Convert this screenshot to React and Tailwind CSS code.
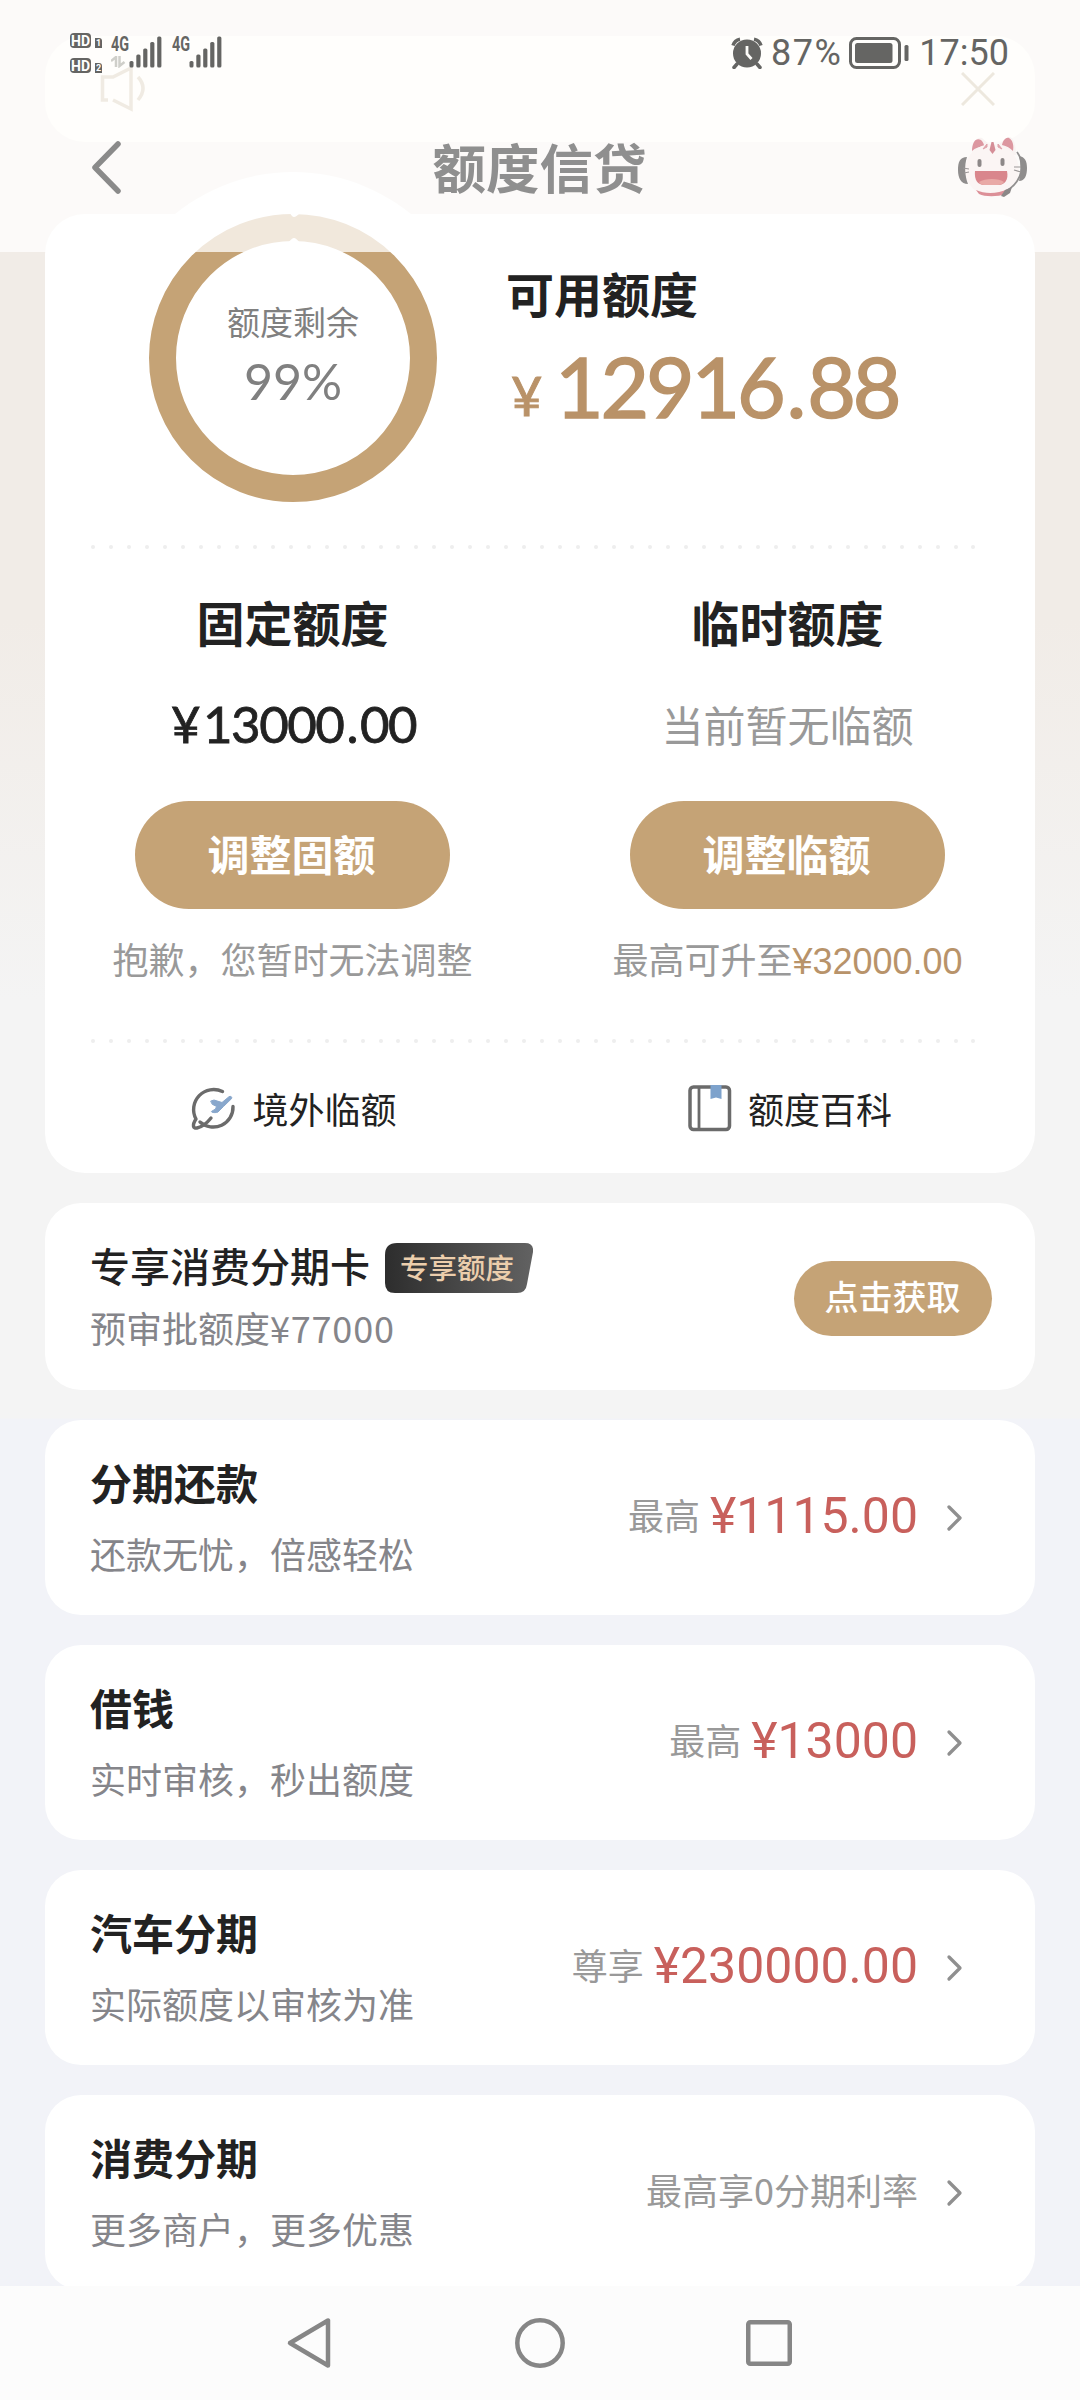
import React from "react";

const CJK = "font-['Noto_Sans_CJK_SC',sans-serif]";

function Signal() {
  return (
    <svg width="34" height="32" viewBox="0 0 34 32" fill="#656563">
      <rect x="0.5" y="25" width="4" height="6.5" rx="1.5" />
      <rect x="7.3" y="18.500" width="4.200" height="13" rx="1.500" />
      <rect x="14.200" y="12.500" width="4.200" height="19" rx="1.500" />
      <rect x="21.200" y="6" width="4.200" height="25.500" rx="1.500" />
      <rect x="28.200" y="0.500" width="4.200" height="31" rx="1.500" />
    </svg>
  );
}

function HdTag({ n }) {
  return (
    <div className="flex h-[15px] items-end gap-[4px]">
      <div className="flex h-[15px] w-[21px] items-center justify-center rounded-[4px] bg-[#656563] font-[Roboto,sans-serif] text-[14px] leading-none font-bold text-white">
        HD
      </div>
      <div className="flex h-[10px] w-[7px] items-center justify-center rounded-tr-[3px] bg-[#656563] font-[Roboto,sans-serif] text-[9px] leading-none font-bold text-white">
        {n}
      </div>
    </div>
  );
}

function AlarmIcon() {
  return (
    <svg width="32" height="32" viewBox="0 0 32 32" fill="none">
      <circle cx="16" cy="16.500" r="14" fill="#656563" />
      <path d="M2 8.500A9 9 0 0 1 9 2.200M30 8.500A9 9 0 0 0 23 2.200" stroke="#656563" strokeWidth="3.500" />
      <path d="M6 27l-3 3.500M26 27l3 3.500" stroke="#656563" strokeWidth="3.500" strokeLinecap="round" />
      <path d="M16 9v8l4.500 5" stroke="#fdfcf9" strokeWidth="2.800" />
    </svg>
  );
}

function Battery() {
  return (
    <svg width="60" height="32" viewBox="0 0 60 32" fill="none">
      <rect x="1.500" y="1.500" width="49" height="29" rx="6" stroke="#656563" strokeWidth="3" />
      <rect x="6" y="6" width="37.500" height="20" rx="2.500" fill="#656563" />
      <rect x="55.500" y="8" width="4" height="16" rx="1.500" fill="#656563" />
    </svg>
  );
}

function Mascot() {
  return (
    <svg width="72" height="64" viewBox="0 0 72 64" fill="none">
      <path d="M15 20C15 7 20 0 25 2l8 7h8l10-8c5-1 8 6 8 18z" fill="#f9f3f2" />
      <path d="M15 15C15 6 19 1 24 4c2 2 3 4 3 6-5 1-9 2-12 5zM45 9c1-5 4-8 7-7 4 2 5 8 4 13-3-3-6-5-11-6z" fill="#dc97a0" />
      <ellipse cx="35" cy="34" rx="27" ry="26" fill="#fbf5f4" />
      <path d="M60 16c8 11 6 28-9 38" stroke="#929090" strokeWidth="1.800" />
      <path d="M10 21C3 21 1 26 1 34s3 14 10 14c-3-8-4-18-1-27z" fill="#8f8d8d" />
      <path d="M62 20c6 1 8 5 8 12s-2 13-8 13c2-8 2-17 0-25z" fill="#8f8d8d" />
      <path d="M30 8l-4 5 4-2zM41 8l4 5-4-2z" fill="#dfa5ac" stroke="#dfa5ac" strokeWidth="1" />
      <path d="M34.500 6h2l2 8-3 4-3-4z" fill="#d58e97" />
      <rect x="20.500" y="23" width="4" height="8" rx="2" fill="#8d8888" />
      <rect x="43.500" y="22" width="4" height="8" rx="2" fill="#8d8888" />
      <path d="M18 35h32c2 9-3 14-8 14H27c-6 0-10-5-9-14z" fill="#d9868c" />
      <path d="M22 46c6-4 20-4 25 0-1 2-4 3-6 3H27c-2 0-4-1-5-3z" fill="#e9a9a6" />
      <path d="M6 32l6 1M7 37l5-1M57 31h7M57 34l7 2" stroke="#9b9797" strokeWidth="1.200" />
      <path d="M19 54c9 4 21 4 32-1l-2 5c-9 3-21 3-27 0z" fill="#dc9098" />
      <path d="M44 60l4-6 7-3-2 6-6 4z" fill="#8b8888" />
    </svg>
  );
}

function GlobePlane() {
  return (
    <svg width="46" height="46" viewBox="0 0 46 46" fill="none" strokeLinecap="round" strokeLinejoin="round">
      <path d="M31.500 5.600A20 20 0 0 0 5 33C1 39 2 43 6 42c5-1 10-5 14-10" stroke="#6b6b6b" strokeWidth="3.400" />
      <path d="M42 20.500A19.800 19.800 0 0 1 9 36" stroke="#6b6b6b" strokeWidth="3.400" />
      <path d="M20 15l3-1 8 2.500 7-5.800c1.700-1 3.500 .4 2.500 2l-8 7.800-5.500 5.500c-1.500 1-7 .8-6.500-.6l4-2.400 1-2.600-4-2z" fill="#88a7cc" stroke="#88a7cc" strokeWidth="1" />
    </svg>
  );
}

function BookIcon() {
  return (
    <svg width="44" height="47" viewBox="0 0 44 47" fill="none">
      <rect x="2" y="2" width="39.500" height="42.500" rx="3.500" stroke="#6b6b6b" strokeWidth="3.500" />
      <path d="M11 3v41" stroke="#6b6b6b" strokeWidth="2.800" />
      <path d="M22.500 0h11v14l-5.500-1.500-5.500 1.500z" fill="#7da2cc" />
    </svg>
  );
}

function Dots() {
  return (
    <div className="flex h-1 justify-between pr-[59px] pl-[46px]">
      {Array.from({ length: 50 }, (_, i) => (
        <i key={i} className="h-1 w-1 rounded-full bg-[#eeeeee]" />
      ))}
    </div>
  );
}

function Chevron() {
  return (
    <svg width="18" height="28" viewBox="0 0 18 28" fill="none" className="ml-[28px]">
      <path d="M3 3l11 11L3 25" stroke="#8f8f8f" strokeWidth="3.300" strokeLinejoin="round" strokeLinecap="round" />
    </svg>
  );
}

function QuotaColumn({ title, value, button, note }) {
  return (
    <div className="flex flex-col items-center">
      <h2 className="text-[48px] leading-[72px] font-bold text-[#222]">{title}</h2>
      <div className="mt-[37px] flex h-[60px] items-center">{value}</div>
      <button className="mt-[47px] flex h-[108px] w-[315px] items-center justify-center rounded-full bg-[#c5a376] pr-[2px] pb-[5px] text-[42px] leading-none font-bold text-white">
        {button}
      </button>
      <p className="mt-[22px] h-[54px] text-[36px] leading-[54px] whitespace-nowrap text-[#999]">{note}</p>
    </div>
  );
}

const offers = [
  { title: "分期还款", sub: "还款无忧，倍感轻松", tag: "最高", amount: "¥1115.00" },
  { title: "借钱", sub: "实时审核，秒出额度", tag: "最高", amount: "¥13000" },
  { title: "汽车分期", sub: "实际额度以审核为准", tag: "尊享", amount: "¥230000.00" },
  { title: "消费分期", sub: "更多商户，更多优惠", tag: "最高享0分期利率" },
];

function Offer({ title, sub, tag, amount }) {
  return (
    <section className="flex h-[195px] shrink-0 items-center justify-between rounded-[36px] bg-white pr-[71px] pl-[45px]">
      <div className="pb-[6px]">
        <h3 className="text-[42px] leading-[60px] font-bold text-[#222]">{title}</h3>
        <p className="mt-[16px] text-[36px] leading-[50px] text-[#85858a]">{sub}</p>
      </div>
      <div className="flex items-center">
        <span className="pb-[8px] text-[36px] leading-[50px] text-[#999]">{tag}</span>
        {amount && <span className="ml-[10px] pb-[4px] font-[Roboto,sans-serif] text-[50px] leading-[50px] text-[#c8605c]">{amount}</span>}
        <Chevron />
      </div>
    </section>
  );
}

function Header() {
  return (
    <header className="absolute inset-x-0 top-0 h-[252px] bg-white/75">
      <div className="flex h-[106px] items-start justify-between pr-[71px] pl-[70px]">
        <div className="flex pt-[33px]">
          <div className="flex flex-col gap-[10px]">
            <HdTag n="1" />
            <HdTag n="2" />
          </div>
          <div className="ml-[9px] flex h-[36px] w-[18px] flex-col items-start pt-[2px]">
            <span className="origin-left scale-x-[0.72] font-[Roboto,sans-serif] text-[20px] leading-[18px] font-bold text-[#656563]">4G</span>
            <svg width="15" height="12" viewBox="0 0 15 12" fill="none" stroke="#cfcfca" strokeWidth="2.500" className="mt-[3px]">
              <path d="M0 5l5-4v10M8.500 0v10l5-4" />
            </svg>
          </div>
          <div className="pt-[3px]"><Signal /></div>
          <span className="-mr-[8px] ml-[9px] origin-left scale-x-[0.72] pt-[2px] font-[Roboto,sans-serif] text-[20px] leading-[18px] font-bold text-[#656563]">4G</span>
          <div className="pt-[3px]"><Signal /></div>
        </div>
        <div className="flex items-center pt-[36px] font-[Roboto,sans-serif] text-[36px] leading-[32px] text-[#656563]">
          <AlarmIcon />
          <span className="ml-[8px] pt-[1px] tracking-[1.500px]">87%</span>
          <span className="ml-[7px]"><Battery /></span>
          <span className="ml-[10px] pt-[1px]">17:50</span>
        </div>
      </div>
      <div className="flex items-center justify-between pr-[51px] pl-[90px]">
        <svg width="32" height="56" viewBox="0 0 32 56" fill="none">
          <path d="M28 4L5 27.500L28 51" stroke="#8a8a8a" strokeWidth="5.500" strokeLinecap="round" strokeLinejoin="round" />
        </svg>
        <h1 className="pb-[4px] text-[53.500px] leading-[120px] font-bold text-[#8f8f8f]">额度信贷</h1>
        <Mascot />
      </div>
    </header>
  );
}

export default function App() {
  return (
    <div className={`relative flex h-[2400px] w-[1080px] flex-col overflow-hidden bg-[#f2f3f8] bg-[linear-gradient(180deg,#f1ece7_0px,#f1ece7_620px,#f4f4f4_1000px,#f4f4f4_1418px,#f2f3f8_1419px)] ${CJK}`}>
      <div className="mx-[45px] mt-[36px] flex h-[106px] shrink-0 items-center justify-between rounded-[40px] bg-[#fffbf1] pr-[40px] pl-[55px]">
        <svg width="48" height="46" viewBox="0 0 48 46" fill="none" stroke="#b9a37c" strokeOpacity="0.85" strokeWidth="3.500">
          <path d="M8 34H2.500V11H13L31 2V43L13 34M38 11Q48 22 38 34" />
        </svg>
        <svg width="34" height="34" viewBox="0 0 34 34" stroke="#b9a37c" strokeWidth="3">
          <path d="M1 1L33 33M33 1L1 33" />
        </svg>
      </div>

      <main className="mt-[72px] flex h-[2072px] shrink-0 flex-col gap-[30px] overflow-visible px-[45px]">
        <section className="relative h-[959px] shrink-0 rounded-[40px] bg-white">
          <div className="absolute -top-[42px] left-[62px] h-[372px] w-[372px] rounded-full bg-white" />
          <div className="relative flex h-[331px]">
            <div className="relative ml-[104px] flex h-[288px] w-[288px] flex-col items-center rounded-full border-[27px] border-[#c5a376] pt-[55px]">
              <svg width="16" height="30" viewBox="0 0 16 30" className="absolute -top-[28px] left-[110px]" fill="#fff">
                <path d="M4 0H14Q10 4 8 4Q6 4 4 0ZM2 30Q6 25 8 25Q10 25 14 30Z" />
              </svg>
              <span className="text-[33px] leading-[50px] text-[#808080]">额度剩余</span>
              <span className="mt-[7px] font-[Lato,sans-serif] text-[50px] leading-[56px] text-[#808080]">99%</span>
            </div>
            <div className="ml-[69px] pt-[42px]">
              <h2 className="text-[48px] leading-[72px] font-bold text-[#222]">可用额度</h2>
              <div className="mt-[8px] ml-[1px] flex items-baseline font-[Lato,sans-serif] leading-[100px] text-[#b99268]">
                <span className="relative -top-[2px] w-[48px] pl-1 text-[54px] [-webkit-text-stroke:1px_#b99268]">¥</span>
                <span className="text-[84px] tracking-[-3.200px] [-webkit-text-stroke:1.500px_#b99268]">12916<span className="mx-[4px]">.</span>88</span>
              </div>
            </div>
          </div>
          <Dots />
          <div className="mt-[36px] flex">
            <div className="w-[495px]">
              <QuotaColumn
                title="固定额度"
                value={
                  <span className="pl-[2px] font-[Lato,sans-serif] text-[51px] leading-[60px] tracking-[-1.500px] text-[#222] [-webkit-text-stroke:0.800px_#222]">
                    <span className="mr-[4px]">¥</span>13000<span className="mx-[3px]">.</span>00
                  </span>
                }
                button="调整固额"
                note="抱歉，您暂时无法调整"
              />
            </div>
            <div className="w-[495px]">
              <QuotaColumn
                title="临时额度"
                value={<span className="text-[42px] leading-[60px] text-[#999]">当前暂无临额</span>}
                button="调整临额"
                note={<>最高可升至<span className="font-['Liberation_Sans',sans-serif] text-[#b8936a]">¥32000.00</span></>}
              />
            </div>
          </div>
          <div className="mt-[54px]"><Dots /></div>
          <div className="mt-[38px] flex text-[36px] leading-[54px] text-[#222]">
            <div className="flex w-[495px] items-center justify-center gap-[15px] pl-[3px]"><GlobePlane /><span className="pb-[1px]">境外临额</span></div>
            <div className="flex w-[495px] items-center justify-center gap-[16px] pl-[5px]"><BookIcon /><span className="pb-[1px]">额度百科</span></div>
          </div>
        </section>

        <section className="flex h-[187px] shrink-0 items-center justify-between rounded-[36px] bg-white pr-[43px] pl-[45px]">
          <div>
            <div className="flex items-center gap-[15px]">
              <h3 className="pb-[5px] text-[40px] leading-[55px] font-medium text-[#222]">专享消费分期卡</h3>
              <div className="relative flex h-[50px] w-[148px] items-center pl-[15px]">
                <svg width="148" height="50" viewBox="0 0 148 50" className="absolute inset-0">
                  <defs>
                    <linearGradient id="badge" x1="0" x2="1"><stop offset="0" stopColor="#2d2d2d" /><stop offset="1" stopColor="#626262" /></linearGradient>
                  </defs>
                  <path d="M12 0H140Q149 0 148 9L142 41Q141 50 132 50H10Q0 50 0 40V12Q0 0 12 0Z" fill="url(#badge)" />
                </svg>
                <span className="relative pb-[2px] text-[28.500px] leading-[48px] font-medium text-[#ecceac]">专享额度</span>
              </div>
            </div>
            <p className="mt-[2px] pb-[1px] text-[36px] leading-[54px] text-[#85858a]">预审批额度<span className="tracking-[0.800px]">¥77000</span></p>
          </div>
          <button className="mt-[3px] flex h-[75px] w-[198px] items-center justify-center rounded-full bg-[#c5a376] pr-[1px] pb-[4px] text-[34px] leading-none font-medium text-white">点击获取</button>
        </section>

        {offers.map((o) => <Offer key={o.title} {...o} />)}
      </main>

      <Header />

      <nav className="absolute inset-x-0 bottom-0 flex h-[114px] items-center justify-center gap-[181px] bg-[#fcfcfc] pr-[4px]">
        <svg width="50" height="54" viewBox="0 0 50 54" fill="none"><path d="M44 4.500V49.500L6 27Z" stroke="#868686" strokeWidth="4.500" strokeLinejoin="round" /></svg>
        <svg width="50" height="50" viewBox="0 0 50 50" fill="none"><circle cx="25" cy="25" r="22.700" stroke="#868686" strokeWidth="4.500" /></svg>
        <svg width="46" height="46" viewBox="0 0 46 46" fill="none"><rect x="2.250" y="2.250" width="41.500" height="41.500" rx="2" stroke="#868686" strokeWidth="4.500" /></svg>
      </nav>
    </div>
  );
}
